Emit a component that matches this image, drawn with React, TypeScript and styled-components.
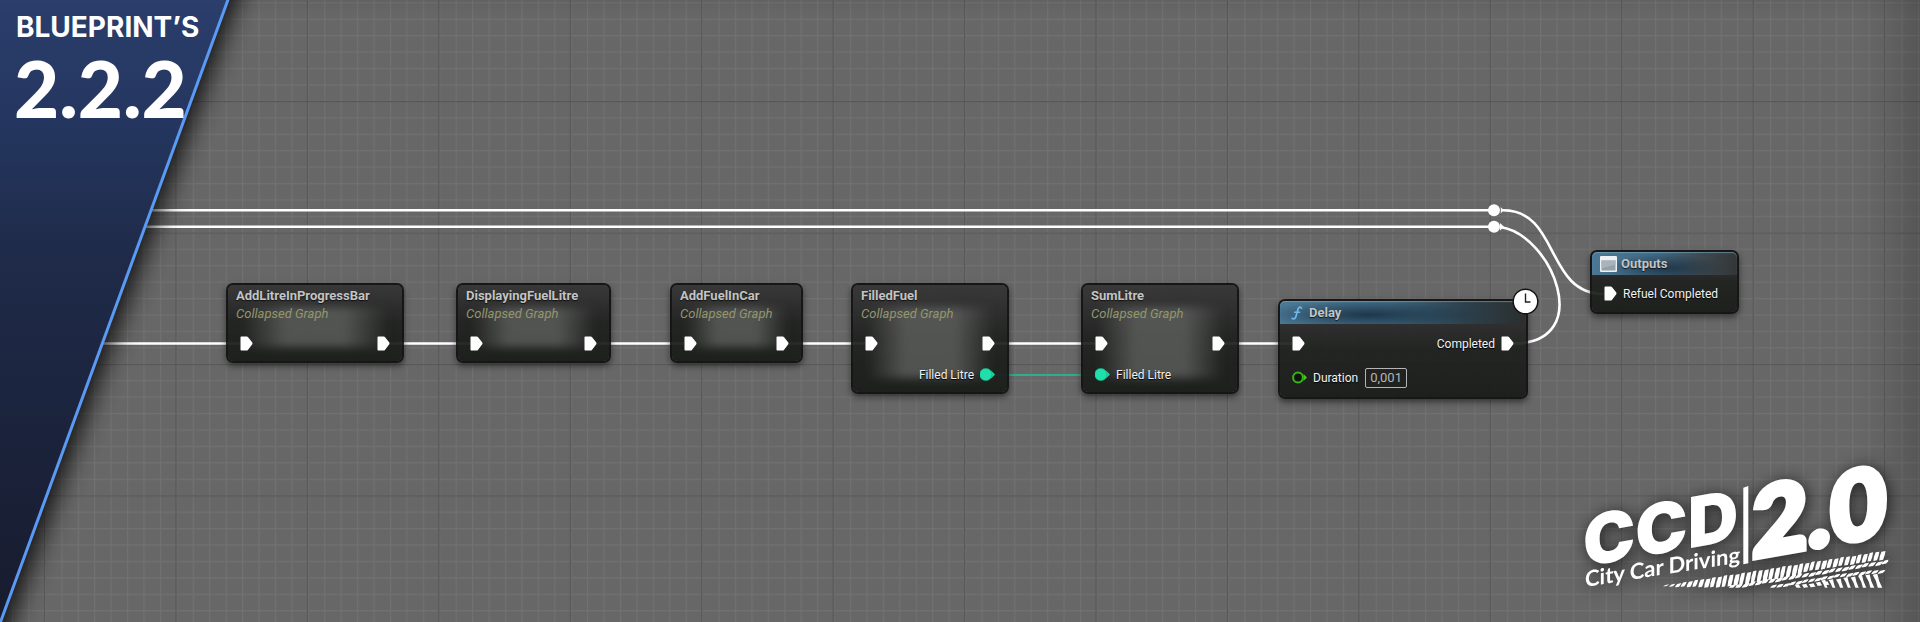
import React from 'react';
import styled, { createGlobalStyle, css } from 'styled-components';

const GlobalStyle = createGlobalStyle`
  *, *::before, *::after { box-sizing: border-box; }
  body { margin: 0; background: #676767; font-family: Roboto, "Liberation Sans", sans-serif; }
`;

const Canvas = styled.main`
  position: relative;
  min-height: 100vh;
  overflow: hidden;
  background: #676767;
`;

const Layer = styled.svg`
  position: absolute;
  inset: 0;
  width: 100%;
  height: 100%;
`;

const Vignette = styled.div`
  position: absolute;
  inset: 0;
  background:
    linear-gradient(270deg, rgba(0, 0, 0, 0.17), rgba(0, 0, 0, 0.06) 32px, transparent 64px),
    linear-gradient(180deg, rgba(0, 0, 0, 0.05), transparent 16px);
`;

/* ---------- banner ---------- */

const Banner = styled.header`
  position: absolute;
  inset: 0 auto 0 0;
  width: 230px;
  padding: 8px 16px;
  color: #fff;
  white-space: nowrap;
`;

const BannerShape = styled.svg`
  position: absolute;
  inset: 0;
  width: 100%;
  height: 100%;
  overflow: visible;
`;

const BannerTitle = styled.h1`
  position: relative;
  margin: 0;
  font: 700 28px/38px Inter, "Liberation Sans", sans-serif;
`;

const BannerVersion = styled.p`
  position: relative;
  margin: 0 0 0 -2px;
  font: 900 78px/84px Lato, "Liberation Sans", sans-serif;
`;

/* ---------- nodes ---------- */

const Node = styled.article<{ $x: number; $y: number; $w: number }>`
  position: absolute;
  left: ${(p) => p.$x}px;
  top: ${(p) => p.$y}px;
  width: ${(p) => p.$w}px;
  border: 2px solid rgba(12, 13, 12, 0.9);
  border-radius: 7px;
  background: linear-gradient(180deg, rgba(54, 54, 54, 0.95), rgba(30, 32, 30, 0.93) 50%, rgba(26, 28, 26, 0.95));
  background-clip: padding-box;
  box-shadow: 0 3px 6px rgba(0, 0, 0, 0.5);
  color: #f2f2f2;
`;

const Glow = styled.div`
  position: absolute;
  inset: 22px 14px 14px;
  background: linear-gradient(90deg, transparent, rgba(98, 100, 98, 0.75) 30%, rgba(98, 100, 98, 0.75) 70%, transparent);
  filter: blur(4px);
`;

const titleText = css`
  margin: 0;
  font-size: 13px;
  font-weight: 700;
  color: #c4c4c4;
  text-shadow: 0 1px 1px rgba(0, 0, 0, 0.7);
`;

const GraphHead = styled.header`
  position: relative;
  padding: 2px 8px 0;
`;

const GraphTitle = styled.h2`
  ${titleText}
  line-height: 17px;
`;

const GraphKind = styled.p`
  margin: 0;
  font-size: 13px;
  font-style: italic;
  line-height: 19px;
  color: #93966c;
`;

const ColorHead = styled.header<{ $tone: string }>`
  display: flex;
  align-items: center;
  gap: 4px;
  height: 23px;
  padding: 0 8px;
  border-radius: 5px 5px 0 0;
  box-shadow: inset 0 1px 1px rgba(130, 180, 210, 0.55);
  background: ${(p) => p.$tone};
`;

const HeadTitle = styled.h2`
  ${titleText}
  line-height: 22px;
`;

const Pins = styled.div<{ $gap?: number; $top: number; $bottom: number }>`
  position: relative;
  display: grid;
  row-gap: ${(p) => p.$gap ?? 0}px;
  padding: ${(p) => p.$top}px 12px ${(p) => p.$bottom}px;
`;

const PinRow = styled.div`
  display: flex;
  align-items: center;
  justify-content: space-between;
  height: 31px;
`;

const Pin = styled.span`
  display: flex;
  align-items: center;
  gap: 6px;
  font-size: 12px;
  line-height: 16px;
  white-space: nowrap;
  text-shadow: 0 1px 1px #000;

  svg { display: block; flex: none; }
`;

const OutPin = styled(Pin)`
  margin-left: auto;
`;

const Field = styled.label`
  display: flex;
  align-items: center;
  gap: 7px;
`;

const ValueInput = styled.input`
  width: 42px;
  height: 20px;
  padding: 0 4px;
  border: 1px solid #b5b5b5;
  border-radius: 2px;
  background: transparent;
  color: #b5b5b5;
  font: 13px/18px Roboto, "Liberation Sans", sans-serif;
  text-shadow: none;
`;

const ClockBadge = styled.svg`
  position: absolute;
  top: -13px;
  right: -13px;
  width: 27px;
  height: 27px;
`;

const Logo = styled.svg`
  position: absolute;
  right: 0;
  bottom: 0;
  width: 360px;
  height: 182px;
  overflow: visible;
  filter: drop-shadow(2px 2px 8px rgba(0, 0, 0, 0.7));
`;

/* ---------- drawings ---------- */

const ExecPin = () => (
  <svg width="13" height="15" viewBox="0 0 13 15">
    <path d="M1.500 .5h5.300c.5 0 .8.2 1.100.5l4.200 5.300c.5.7.5 1.600 0 2.300L7.900 14c-.3.4-.7.5-1.100.5H1.500c-.6 0-1-.4-1-1v-12c0-.6.4-1 1-1z" fill="#fff" />
  </svg>
);

const DataPin = () => (
  <svg width="15" height="13" viewBox="0 0 15 13">
    <path d="M11 2.500l4 4-4 4z" fill="#1fd9a4" />
    <circle cx="5.800" cy="6.500" r="6.200" fill="#1fe0aa" stroke="#178f70" strokeWidth=".5" />
  </svg>
);

const FloatPin = () => (
  <svg width="15" height="13" viewBox="0 0 15 13">
    <path d="M11.500 3l3.500 3.500-3.500 3.500z" fill="#3bd016" />
    <circle cx="6" cy="6.500" r="4.900" fill="#10150f" stroke="#35b811" strokeWidth="2" />
  </svg>
);

const FunctionIcon = () => (
  <svg width="17" height="16" viewBox="0 0 17 16" fill="none" stroke="#6db8ea" strokeLinecap="round">
    <path d="M13.500 3.200c-.5-1.300-2.400-1.500-3.200.2C9.400 5.500 8.700 10 7.500 12.600c-.8 1.700-2.700 1.600-3.300.6" strokeWidth="1.700" />
    <path d="M6.500 7.200h5.200" strokeWidth="1.400" />
  </svg>
);

const WindowIcon = () => (
  <svg width="17" height="16" viewBox="0 0 17 16">
    <rect width="17" height="16" rx="1" fill="#eef1f3" />
    <rect x="1.500" y="4.500" width="14" height="10" fill="#93a1ab" />
    <path d="M1.500 4.500h14v4l-14 4z" fill="#a9b3ba" />
  </svg>
);

const Clock = () => (
  <ClockBadge viewBox="0 0 27 27" role="img" aria-label="Latent">
    <circle cx="13.500" cy="13.500" r="12.300" fill="#fff" stroke="#141414" strokeWidth="1.500" />
    <path d="M13.500 5.500v8.500h5" fill="none" stroke="#222" strokeWidth="1.400" />
  </ClockBadge>
);

const STEP = 16.43;

const Grid = () => (
  <Layer aria-hidden="true">
    <defs>
      <pattern id="minor" x="12" y="2.200" width={STEP} height={STEP} patternUnits="userSpaceOnUse">
        <path d={`M0 .6H${STEP}M.6 0V${STEP}`} stroke="#717171" strokeWidth="1.200" />
      </pattern>
      <pattern id="major" x="44" y="101" width={STEP * 8} height={STEP * 8} patternUnits="userSpaceOnUse">
        <path d={`M0 .6H${STEP * 8}M.6 0V${STEP * 8}`} stroke="#575757" strokeWidth="1.200" />
      </pattern>
    </defs>
    <rect width="100%" height="100%" fill="url(#minor)" />
    <rect width="100%" height="100%" fill="url(#major)" />
  </Layer>
);

const Wires = () => (
  <Layer aria-hidden="true" fill="none" stroke="#fff" strokeWidth="2.600">
    <path d="M0 210.300H1494M0 226.800H1494" />
    <path d="M0 343.500H240M389 343.500H470M597 343.500H684M789 343.500H865M994 343.500H1095M1224 343.500H1292" />
    <path d="M994 375H1096" stroke="#2fae8b" strokeWidth="2" />
    <path d="M1503 210.300C1560 210.300 1545 294 1604 294" />
    <path d="M1500 227C1552 234 1596 343 1514 343.500" />
    <g fill="#fff" stroke="none">
      <circle cx="1494" cy="210.300" r="6" />
      <circle cx="1494" cy="226.800" r="6" />
      <path d="M1500 206.500l4 3.800-4 3.800zM1500 223l4 3.800-4 3.800z" />
    </g>
    <path d="M1500.500 206.500v8" stroke="#666" strokeWidth=".8" />
  </Layer>
);

/* One band of tread blocks: slanted blocks that follow a sloping edge. */
type Band = {
  from: number;
  to: number;
  pitch: number;
  width: number;
  lean: number;
  top: (x: number) => number;
  tall: (x: number) => number;
};

const BANDS: Band[] = [
  { from: 40, to: 700, pitch: 17.5, width: 11, lean: 7, top: (x) => 136 - (x - 40) * 0.157, tall: (x) => Math.min(x > 450 ? 26 : 34, 5 + (x - 40) * 0.17) },
  { from: 235, to: 700, pitch: 20, width: 14, lean: 9, top: (x) => 137 - (x - 235) * 0.163, tall: () => 12 },
  { from: 360, to: 700, pitch: 19, width: 14, lean: 8, top: (x) => 137 - (x - 360) * 0.17 + Math.max(0, x - 560) * 0.07, tall: () => 10 },
  { from: 440, to: 540, pitch: 21, width: 14, lean: -6, top: (x) => 137 - (x - 440) * 0.13, tall: () => 10 },
  { from: 530, to: 690, pitch: 22, width: 13, lean: -16, top: (x) => 123 - (x - 530) * 0.13, tall: () => 44 },
];

const treadPath = BANDS.map(({ from, to, pitch, width, lean, top, tall }) => {
  let d = '';
  for (let x = from, i = 0; x < to; x += pitch, i++) {
    const wobble = ((i * 7) % 5) - 2;
    const y = top(x) + wobble * 0.6;
    const h = tall(x);
    const w = width + wobble * 0.5;
    d += `M${x + lean} ${y}l${w} ${-w * 0.2}q${-lean * 0.2} ${h * 0.5} ${-lean} ${h}l${-w} ${w * 0.2}q${lean * 0.1} ${-h * 0.5} ${lean} ${-h}z`;
  }
  return d;
}).join('');

const CcdLogo = () => (
  <Logo viewBox="0 0 360 182" fill="#fff" role="img" aria-label="CCD 2.0 City Car Driving">
    <defs>
      <clipPath id="track"><path d="M0 0H715V143H0z" /></clipPath>
    </defs>
    <text transform="translate(23 127) skewY(-10)" fontFamily="Inter" fontWeight="900" fontSize="70">CCD</text>
    <text transform="translate(25 147) skewY(-9)" fontFamily="Lato" fontWeight="700" fontSize="22">City Car Driving</text>
    <path d="M183.300 47.700l5-1.700v77.300l-5 1z" />
    <text transform="translate(192 118) skewY(-10)" fontFamily="Lato" fontWeight="900" fontSize="96" stroke="#fff" strokeWidth="6" strokeLinejoin="miter">2.0</text>
    <g transform="translate(90 100) scale(.33333)" clipPath="url(#track)">
      <path d={treadPath} />
    </g>
  </Logo>
);

/* ---------- node kinds ---------- */

type GraphProps = { title: string; x: number; w: number; input?: string; output?: string };

const CollapsedGraph = ({ title, x, w, input, output }: GraphProps) => (
  <Node $x={x} $y={283} $w={w}>
    <Glow />
    <GraphHead>
      <GraphTitle>{title}</GraphTitle>
      <GraphKind>Collapsed Graph</GraphKind>
    </GraphHead>
    <Pins $top={5} $bottom={2}>
      <PinRow>
        <Pin><ExecPin /></Pin>
        <OutPin><ExecPin /></OutPin>
      </PinRow>
      {(input || output) && (
        <PinRow>
          {input && <Pin><DataPin />{input}</Pin>}
          {output && <OutPin>{output}<DataPin /></OutPin>}
        </PinRow>
      )}
    </Pins>
  </Node>
);

const DELAY_TONE =
  'radial-gradient(110px 14px at 36% 60%, rgba(20,42,60,.8), rgba(20,42,60,0)), linear-gradient(90deg, #4b7895, #3f6882 45%, #2c414d 75%, #2b2e2e)';
const OUTPUT_TONE =
  'radial-gradient(60px 14px at 50% 70%, rgba(20,42,60,.75), rgba(20,42,60,0)), linear-gradient(100deg, #4b7895, #416882 45%, #3f4b52 72%, #333535)';

export default function App() {
  return (
    <>
      <GlobalStyle />
      <Canvas>
        <Grid />
        <Vignette />
        <Wires />

        <CollapsedGraph title="AddLitreInProgressBar" x={226} w={178} />
        <CollapsedGraph title="DisplayingFuelLitre" x={456} w={155} />
        <CollapsedGraph title="AddFuelInCar" x={670} w={133} />
        <CollapsedGraph title="FilledFuel" x={851} w={158} output="Filled Litre" />
        <CollapsedGraph title="SumLitre" x={1081} w={158} input="Filled Litre" />

        <Node $x={1278} $y={299} $w={250}>
          <ColorHead $tone={DELAY_TONE}>
            <FunctionIcon />
            <HeadTitle>Delay</HeadTitle>
          </ColorHead>
          <Pins $top={4} $bottom={4} $gap={3}>
            <PinRow>
              <Pin><ExecPin /></Pin>
              <OutPin>Completed<ExecPin /></OutPin>
            </PinRow>
            <PinRow>
              <Pin>
                <FloatPin />
                <Field>Duration<ValueInput type="text" defaultValue="0,001" /></Field>
              </Pin>
            </PinRow>
          </Pins>
          <Clock />
        </Node>

        <Node $x={1590} $y={250} $w={149}>
          <ColorHead $tone={OUTPUT_TONE}>
            <WindowIcon />
            <HeadTitle>Outputs</HeadTitle>
          </ColorHead>
          <Pins $top={3} $bottom={3}>
            <PinRow>
              <Pin><ExecPin />Refuel Completed</Pin>
            </PinRow>
          </Pins>
        </Node>

        <Banner>
          <BannerShape viewBox="0 0 230 622" preserveAspectRatio="none" aria-hidden="true">
            <defs>
              <linearGradient id="navy" x1="0" y1="0" x2="0" y2="1">
                <stop offset="0" stopColor="#2b3e6c" />
                <stop offset=".2" stopColor="#24365f" />
                <stop offset=".4" stopColor="#1f2b4a" />
                <stop offset="1" stopColor="#171b2d" />
              </linearGradient>
              <filter id="soft" x="-50%" y="-20%" width="200%" height="140%">
                <feGaussianBlur stdDeviation="12" />
              </filter>
            </defs>
            <path d="M-40-60H258L0 650H-40z" fill="#000" opacity=".85" filter="url(#soft)" />
            <path d="M0 0H228L0 622z" fill="url(#navy)" />
            <path d="M229-3L-1 626" stroke="#5a9af5" strokeWidth="3" />
          </BannerShape>
          <BannerTitle>BLUEPRINT’S</BannerTitle>
          <BannerVersion>2.2.2</BannerVersion>
        </Banner>

        <CcdLogo />
      </Canvas>
    </>
  );
}
